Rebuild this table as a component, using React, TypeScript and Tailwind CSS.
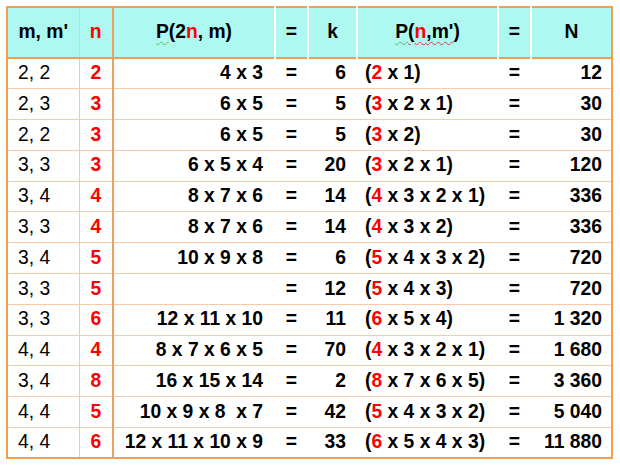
const rows: [string, string, string, string, string, string][] = [
  ['2, 2', '2', '4 x 3', '6', ' x 1)', '12'],
  ['2, 3', '3', '6 x 5', '5', ' x 2 x 1)', '30'],
  ['2, 2', '3', '6 x 5', '5', ' x 2)', '30'],
  ['3, 3', '3', '6 x 5 x 4', '20', ' x 2 x 1)', '120'],
  ['3, 4', '4', '8 x 7 x 6', '14', ' x 3 x 2 x 1)', '336'],
  ['3, 3', '4', '8 x 7 x 6', '14', ' x 3 x 2)', '336'],
  ['3, 4', '5', '10 x 9 x 8', '6', ' x 4 x 3 x 2)', '720'],
  ['3, 3', '5', '', '12', ' x 4 x 3)', '720'],
  ['3, 3', '6', '12 x 11 x 10', '11', ' x 5 x 4)', '1 320'],
  ['4, 4', '4', '8 x 7 x 6 x 5', '70', ' x 3 x 2 x 1)', '1 680'],
  ['3, 4', '8', '16 x 15 x 14', '2', ' x 7 x 6 x 5)', '3 360'],
  ['4, 4', '5', '10 x 9 x 8\u00a0 x 7', '42', ' x 4 x 3 x 2)', '5 040'],
  ['4, 4', '6', '12 x 11 x 10 x 9', '33', ' x 5 x 4 x 3)', '11 880'],
]

const green = 'underline decoration-wavy decoration-[#5cb85c] decoration-1 underline-offset-[3px]'
const red = 'underline decoration-wavy decoration-[#e04040] decoration-1 underline-offset-[3px]'

export default function App() {
  return (
    <div className="w-[620px] h-[465px] bg-white p-[6px]" style={{ fontFamily: '"Liberation Sans", Arial, sans-serif' }}>
      <table className="w-[605px] table-fixed border-collapse border-2 border-[#f0a050] text-[19.3px] text-black">
        <colgroup>
          <col className="w-[72px]" />
          <col className="w-[34px]" />
          <col className="w-[162px]" />
          <col className="w-[33px]" />
          <col className="w-[49px]" />
          <col className="w-[141px]" />
          <col className="w-[33px]" />
          <col className="w-[81px]" />
        </colgroup>
        <thead>
          <tr className="h-[51px] bg-[#aef8f2] font-bold border-b-2 border-[#f0a050]">
            <th className="text-center border-r border-[#f8c9a0]">m, m'</th>
            <th className="text-center text-[#ff0000] border-r-2 border-[#eea060]">n</th>
            <th className="text-center border-r-2 border-white">
              <span className={green}>P</span>(2<span className="text-[#ff0000]">n</span>, m)
            </th>
            <th className="text-center border-r-2 border-white">=</th>
            <th className="text-center border-r-2 border-white">k</th>
            <th className="text-center border-r-2 border-white">
              <span className={green}>P</span>
              <span className={red}>
                (<span className="text-[#ff0000]">n</span>,m'
              </span>
              )
            </th>
            <th className="text-center border-r-2 border-white">=</th>
            <th className="text-center">N</th>
          </tr>
        </thead>
        <tbody>
          {rows.map((r, i) => (
            <tr key={i} className="h-[30.8px] border-t border-[#f8cba8] first:border-t-0">
              <td className="pl-[10px] border-r border-[#f8c9a0]">{r[0]}</td>
              <td className="text-center font-bold text-[#ff0000] border-r-2 border-[#eea060]">{r[1]}</td>
              <td className="text-right font-bold pr-[12px] whitespace-nowrap">{r[2]}</td>
              <td className="text-center font-bold">=</td>
              <td className="text-right font-bold pr-[11px]">{r[3]}</td>
              <td className="text-left font-bold pl-[8px] whitespace-nowrap">
                (<span className="text-[#ff0000]">{r[1]}</span>
                {r[4]}
              </td>
              <td className="text-center font-bold">=</td>
              <td className="text-right font-bold pr-[9px] whitespace-nowrap">{r[5]}</td>
            </tr>
          ))}
        </tbody>
      </table>
    </div>
  )
}
